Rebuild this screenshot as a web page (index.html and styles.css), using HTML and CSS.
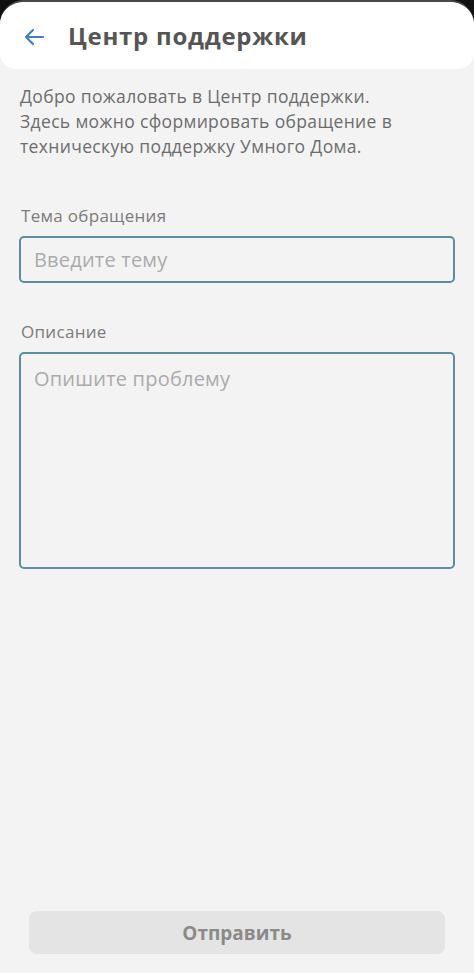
FILE: index.html
```html
<!DOCTYPE html>
<html lang="ru">
<head>
<meta charset="utf-8">
<link rel="stylesheet" href="styles.css">
</head>
<body>
<div class="screen">
  <header class="topbar">
    <svg class="back" width="22" height="18" viewBox="0 0 22 18" aria-hidden="true">
      <path d="M20 9H3M10 2L3 9l7 7" fill="none" stroke="#3f7fc4" stroke-width="2.2" stroke-linecap="round" stroke-linejoin="round"/>
    </svg>
    <h1 class="title">Центр поддержки</h1>
  </header>
  <main class="content">
    <p class="intro">Добро пожаловать в Центр поддержки.<br>Здесь можно сформировать обращение в<br>техническую поддержку Умного Дома.</p>
    <label class="field-label">Тема обращения</label>
    <div class="input"><span class="placeholder">Введите тему</span></div>
    <label class="field-label second">Описание</label>
    <div class="input textarea"><span class="placeholder">Опишите проблему</span></div>
    <div class="spacer"></div>
    <div class="btn">Отправить</div>
  </main>
</div>
</body>
</html>
```
FILE: styles.css
```css
* { box-sizing: border-box; }
html, body { margin: 0; padding: 0; }
body {
  width: 474px;
  height: 973px;
  background: #111;
  font-family: "Open Sans", "Noto Sans", sans-serif;
  overflow: hidden;
}
.screen {
  height: 973px;
  display: flex;
  flex-direction: column;
  background: #f3f3f3;
  border-top: 2px solid #4a4a4a;
  border-radius: 24px 24px 0 0;
  overflow: hidden;
}
.topbar {
  height: 67px;
  background: #fff;
  border-radius: 22px 22px 16px 16px;
  display: flex;
  align-items: center;
  padding: 0 0 0 23px;
  flex-shrink: 0;
}
.back { margin-top: 2px; }
.title {
  margin: 0 0 0 23px;
  font-size: 24px;
  font-weight: 700;
  color: #555;
  letter-spacing: 0.75px;
}
.content {
  flex: 1;
  display: flex;
  flex-direction: column;
  padding: 15px 19px 19px 19px;
}
.intro {
  margin: 0 0 0 1px;
  font-size: 17.5px;
  line-height: 25px;
  letter-spacing: 0.35px;
  color: #6c6c6c;
  white-space: nowrap;
}
.field-label {
  display: block;
  margin: 46px 0 9px 2px;
  font-size: 17px;
  letter-spacing: 0.3px;
  color: #7b7b7b;
  line-height: 22px;
}
.field-label.second { margin-top: 38px; }
.input {
  height: 47px;
  border: 2px solid #5b8e9e;
  border-radius: 5px;
  padding: 0 0 0 13px;
  display: flex;
  align-items: center;
}
.textarea {
  height: 217px;
  align-items: flex-start;
  padding-top: 11px;
}
.placeholder {
  font-size: 20px;
  letter-spacing: 0.2px;
  color: #ababab;
}
.spacer { flex: 1; }
.btn {
  margin: 0 10px;
  height: 43px;
  background: #e4e4e4;
  border-radius: 8px;
  display: flex;
  align-items: center;
  justify-content: center;
  font-size: 19px;
  font-weight: 700;
  color: #8a8a8a;
}
```
